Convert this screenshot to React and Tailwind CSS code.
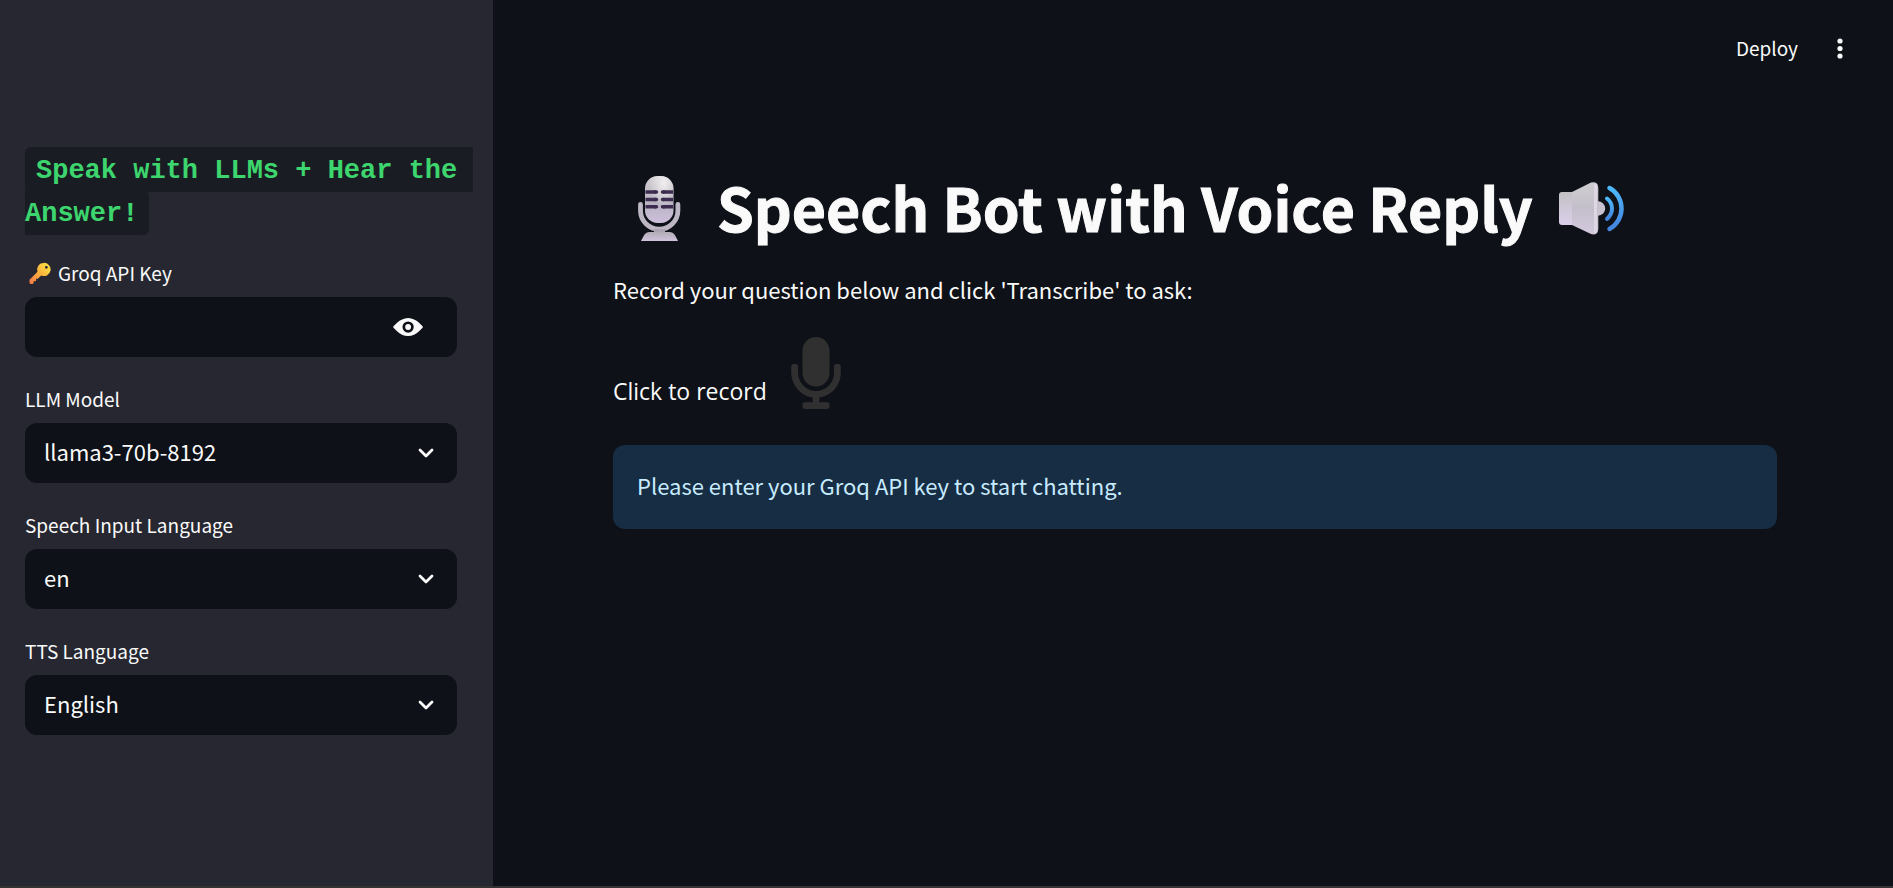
import { useState } from "react";
import { FaMicrophone } from "react-icons/fa";

function KeyEmoji() {
  return (
    <svg viewBox="0 0 32 32" className="ml-[3px] mr-1.5 h-6 w-6 shrink-0" role="img" aria-label="key">
      <defs>
        <linearGradient id="key" x1="1" y1="0" x2="0" y2="1">
          <stop offset="0.2" stopColor="#fcd53f" />
          <stop offset="0.6" stopColor="#fba53f" />
          <stop offset="1" stopColor="#f3764a" />
        </linearGradient>
      </defs>
      <path
        fill="url(#key)"
        fillRule="evenodd"
        d="M21 2.500a8.800 8.800 0 0 0-8.300 11.700L2.600 24.300a2 2 0 0 0-.6 1.400V28.500a2 2 0 0 0 2 2H6a1.500 1.500 0 0 0 1.500-1.500V27h2a1.300 1.300 0 0 0 1.300-1.300V23.500h2.400l4.300-4.300A8.800 8.800 0 1 0 21 2.500Zm3.500 4a1.900 1.900 0 1 1 0 3.800a1.900 1.900 0 0 1 0-3.800Z"
      />
    </svg>
  );
}

function MicEmoji() {
  return (
    <svg viewBox="0 0 80 85" className="h-[85px] w-20 shrink-0" role="img" aria-label="studio microphone">
      <defs>
        <linearGradient id="micHead" x1="0" y1="0" x2="0" y2="1">
          <stop offset="0" stopColor="#d2cfd3" />
          <stop offset="0.55" stopColor="#b9b3c0" />
          <stop offset="1" stopColor="#cdbfdc" />
        </linearGradient>
        <radialGradient id="micShine" cx="0.65" cy="0.15" r="0.5">
          <stop offset="0" stopColor="#efedee" />
          <stop offset="1" stopColor="#efedee" stopOpacity="0" />
        </radialGradient>
        <linearGradient id="micBase" x1="0" y1="0" x2="0" y2="1">
          <stop offset="0" stopColor="#b2adb6" />
          <stop offset="1" stopColor="#cfc2de" />
        </linearGradient>
      </defs>
      <path d="M19.500 39.500v6a18.700 18.700 0 0 0 37.400 0v-6" fill="none" stroke="#bdb7c5" strokeWidth="4.800" strokeLinecap="round" />
      <path d="M33 64h11v5H33z" fill="#aaa3b2" />
      <path d="M28 67h21q3 0 4.500 2.500t3.500 6.500H20q2-4 3.500-6.500T28 67Z" fill="url(#micBase)" />
      <rect x="24" y="11" width="28.500" height="47" rx="12.500" fill="url(#micHead)" />
      <rect x="24" y="11" width="28.500" height="47" rx="12.500" fill="url(#micShine)" />
      <g stroke="#3c2c50" strokeWidth="3.500">
        <path d="M24.500 27H35M42 27h10M24.500 34.500H35M42 34.500h10M24.500 41.700H35M42 41.700h10" />
        <path d="M34 27h1.500M41.500 27H43M34 34.500h1.500M41.500 34.500H43M34 41.700h1.500M41.500 41.700H43" strokeLinecap="round" />
      </g>
    </svg>
  );
}

function SpeakerEmoji() {
  return (
    <svg viewBox="0 0 90 75" className="h-[75px] w-[90px] shrink-0" role="img" aria-label="speaker high volume">
      <defs>
        <linearGradient id="cone" x1="0" y1="0" x2="0" y2="1">
          <stop offset="0" stopColor="#cfcdd0" />
          <stop offset="0.5" stopColor="#c4bfcb" />
          <stop offset="1" stopColor="#d3c9de" />
        </linearGradient>
        <linearGradient id="coneBack" x1="0" y1="0" x2="0" y2="1">
          <stop offset="0" stopColor="#c2c0c3" />
          <stop offset="0.5" stopColor="#cfc8d8" />
          <stop offset="1" stopColor="#dbd0ea" />
        </linearGradient>
        <linearGradient id="wave" x1="0" y1="0" x2="0" y2="1">
          <stop offset="0" stopColor="#4db8fb" />
          <stop offset="1" stopColor="#4484dd" />
        </linearGradient>
      </defs>
      <circle cx="53" cy="38.500" r="7.200" fill="#c9c3d0" />
      <path d="M17 22h13v33H17q-3 0-3-3V25q0-3 3-3Z" fill="url(#coneBack)" />
      <path d="M27 22 46 12.500q3-.8 5 .3 2.300 1.400 2.300 5v41q0 3.600-2.300 5-2 1.100-5 .2L27 55Z" fill="url(#cone)" />
      <path d="M50.500 15v47" stroke="#ddd7e3" strokeWidth="3" strokeLinecap="round" />
      <path d="M62 28.500q5 4 5 10t-5 10.500" fill="none" stroke="url(#wave)" strokeWidth="4" strokeLinecap="round" />
      <path d="M64.500 18c7.500 4 12 12 12 20.500s-4.500 16.500-12 20.500" fill="none" stroke="url(#wave)" strokeWidth="4.500" strokeLinecap="round" />
    </svg>
  );
}

function EyeIcon() {
  return (
    <svg viewBox="0 0 8 8" className="h-[30px] w-[30px]" fill="currentColor" aria-hidden="true">
      <path d="M4.030 1.600C1.730 1.600.030 4 .030 4s1.700 2.420 4 2.420C6.330 6.420 8 4 8 4S6.330 1.600 4.030 1.600Zm0 .9a1.500 1.500 0 1 1 0 3 1.500 1.500 0 0 1 0-3Zm0 .720a.78.78 0 1 0 0 1.560.78.78 0 0 0 0-1.560Z" />
    </svg>
  );
}

function Chevron() {
  return (
    <svg
      viewBox="0 0 16 10"
      className="pointer-events-none absolute right-[23px] top-1/2 h-[10px] w-4 -translate-y-1/2"
      fill="none"
      stroke="#fafafa"
      strokeWidth="2.800"
      strokeLinecap="round"
      strokeLinejoin="round"
      aria-hidden="true"
    >
      <path d="M2 2l6 6 6-6" />
    </svg>
  );
}

const LABEL = "flex h-6 items-center text-[19px] leading-6";
const FIELD =
  "h-[60px] w-full rounded-xl bg-[#0e1117] px-[19px] pb-1 text-[22px] leading-9 text-[#fafafa] outline-none focus:ring-1 focus:ring-[#ff4b4b]";

function SelectField({ id, label, options }) {
  const [value, setValue] = useState(options[0]);
  return (
    <div className="flex flex-col gap-3">
      <label htmlFor={id} className={LABEL}>
        {label}
      </label>
      <div className="relative">
        <select id={id} value={value} onChange={(e) => setValue(e.target.value)} className={`${FIELD} appearance-none`}>
          {options.map((option) => (
            <option key={option}>{option}</option>
          ))}
        </select>
        <Chevron />
      </div>
    </div>
  );
}

function Sidebar() {
  const [visible, setVisible] = useState(false);
  return (
    <aside className="w-[493px] shrink-0 bg-[#262730] pl-[25px] pr-9 pt-[150px]">
      <h2 className="whitespace-pre font-['Liberation_Mono',monospace] text-[27px] font-bold leading-[43px] text-[#3dd56d]">
        <code className="rounded-md bg-[#1a1c24] px-[11px] pb-1.5 pt-[9px] [font-family:inherit]">
          {"Speak with LLMs + Hear the \nAnswer!"}
        </code>
      </h2>
      <div className="mt-[25px] flex flex-col gap-[30px]">
        <div className="flex flex-col gap-3">
          <label htmlFor="api-key" className={LABEL}>
            <KeyEmoji />
            Groq API Key
          </label>
          <div className="relative">
            <input id="api-key" type={visible ? "text" : "password"} className={`${FIELD} pr-24`} />
            <button
              type="button"
              aria-label="Show password text"
              onClick={() => setVisible(!visible)}
              className="absolute right-[34px] top-1/2 -translate-y-1/2"
            >
              <EyeIcon />
            </button>
          </div>
        </div>
        <SelectField id="model" label="LLM Model" options={["llama3-70b-8192", "llama3-8b-8192"]} />
        <SelectField id="speech-language" label="Speech Input Language" options={["en", "fr", "es"]} />
        <SelectField id="tts-language" label="TTS Language" options={["English", "French", "Spanish"]} />
      </div>
    </aside>
  );
}

export default function App() {
  return (
    <div className="flex min-h-screen border-b-2 border-[#343232] bg-[#0e1117] font-['Noto_Sans_CJK_SC',sans-serif] text-[#fafafa]">
      <Sidebar />
      <div className="flex min-w-0 flex-1 flex-col">
        <header className="flex h-24 items-center justify-end gap-[35px] pr-[46px]">
          <button type="button" className="text-[19px] leading-6">
            Deploy
          </button>
          <button type="button" aria-label="Main menu">
            <svg viewBox="0 0 14 22" className="h-[22px] w-[14px]" fill="currentColor" aria-hidden="true">
              <circle cx="7" cy="4" r="2.600" />
              <circle cx="7" cy="11.500" r="2.600" />
              <circle cx="7" cy="19" r="2.600" />
            </svg>
          </button>
        </header>
        <main className="flex flex-col pl-[120px] pr-[116px] pt-[69px]">
          <h1 className="flex h-[85px] items-center whitespace-nowrap pl-2 text-[59px] font-bold leading-[80px] [-webkit-text-stroke:1px_#fafafa]">
            <MicEmoji />
            <span className="pb-0.5 pl-4">Speech Bot with Voice Reply</span>
            <span className="pl-3">
              <SpeakerEmoji />
            </span>
          </h1>
          <p className="mt-[21px] text-[22px] leading-9">Record your question below and click 'Transcribe' to ask:</p>
          <div className="mt-[30px] flex items-end">
            <span className="font-['Open_Sans',sans-serif] text-[23px] leading-9">Click to record</span>
            <button type="button" aria-label="Record" className="ml-[13px] text-[#303030]">
              <FaMicrophone size={72} />
            </button>
          </div>
          <div role="alert" className="mt-9 rounded-xl bg-[#172d43] px-6 pb-[26px] pt-[22px] text-[22px] leading-9 text-[#c7ebff]">
            Please enter your Groq API key to start chatting.
          </div>
        </main>
      </div>
    </div>
  );
}
